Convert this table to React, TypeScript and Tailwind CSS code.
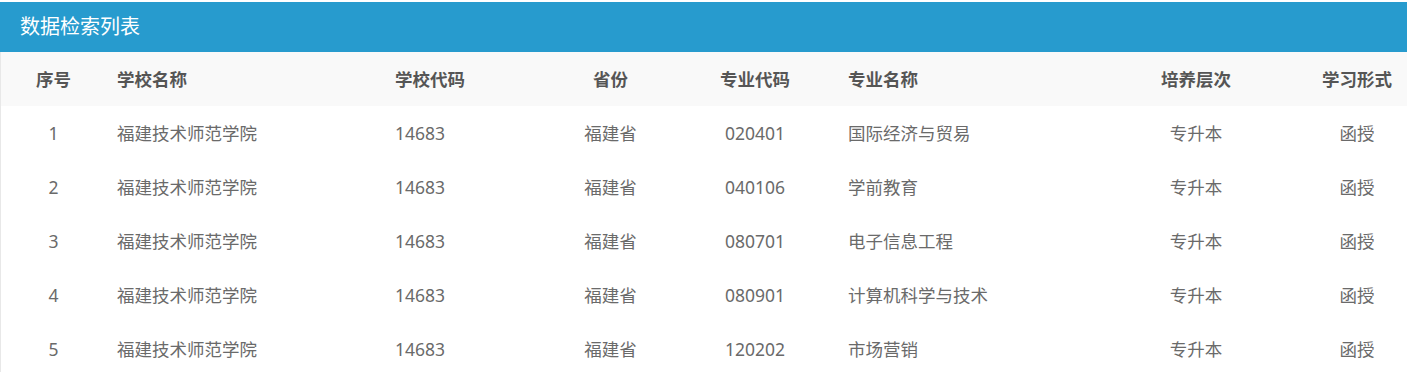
const FONT = '"Noto Sans", "Noto Sans CJK SC", sans-serif';

const rows = [
  { no: 1, school: "福建技术师范学院", code: "14683", prov: "福建省", major: "020401", name: "国际经济与贸易", level: "专升本", form: "函授" },
  { no: 2, school: "福建技术师范学院", code: "14683", prov: "福建省", major: "040106", name: "学前教育", level: "专升本", form: "函授" },
  { no: 3, school: "福建技术师范学院", code: "14683", prov: "福建省", major: "080701", name: "电子信息工程", level: "专升本", form: "函授" },
  { no: 4, school: "福建技术师范学院", code: "14683", prov: "福建省", major: "080901", name: "计算机科学与技术", level: "专升本", form: "函授" },
  { no: 5, school: "福建技术师范学院", code: "14683", prov: "福建省", major: "120202", name: "市场营销", level: "专升本", form: "函授" },
];

// column layout: widths add up to the 1406px table body
const COLS = "grid-cols-[105px_280px_164px_121px_168px_246px_222px_100px]";

export default function App() {
  return (
    <div className="min-h-[372px] bg-white pt-[2px]" style={{ fontFamily: FONT }}>
      <div className="flex h-[50px] items-center bg-[#279bce] pl-[20px] text-[20px] text-white">
        数据检索列表
      </div>
      <div className="border-l border-[#e8e8e8]">
        <div className={`grid ${COLS} h-[54px] items-center bg-[#f9f9f9] text-[17.5px] font-bold text-[#555]`}>
          <div className="text-center">序号</div>
          <div className="pl-[11px]">学校名称</div>
          <div className="pl-[9px]">学校代码</div>
          <div className="text-center">省份</div>
          <div className="text-center">专业代码</div>
          <div className="pl-[9px]">专业名称</div>
          <div className="text-center">培养层次</div>
          <div className="text-center">学习形式</div>
        </div>
        {rows.map((r) => (
          <div key={r.no} className={`grid ${COLS} h-[54px] items-center text-[17.5px] text-[#6a6a6a]`}>
            <div className="text-center">{r.no}</div>
            <div className="pl-[11px]">{r.school}</div>
            <div className="pl-[9px]">{r.code}</div>
            <div className="text-center">{r.prov}</div>
            <div className="text-center">{r.major}</div>
            <div className="pl-[9px]">{r.name}</div>
            <div className="text-center">{r.level}</div>
            <div className="text-center">{r.form}</div>
          </div>
        ))}
      </div>
    </div>
  );
}
